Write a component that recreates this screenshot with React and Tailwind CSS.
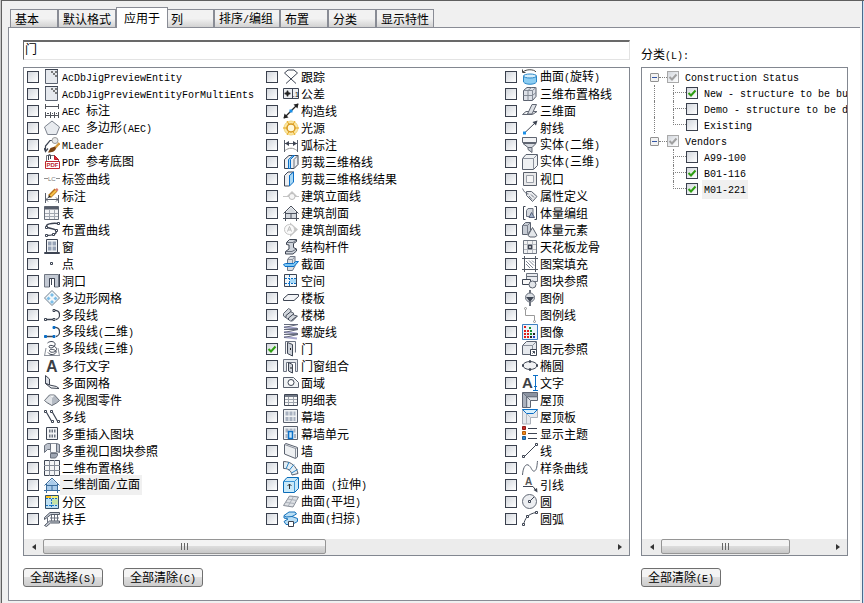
import { useState } from 'react'
import clsx from 'clsx'

const INK = '#3d4452'
const PALE = '#dde1e8'
const BLUE = '#0b6fc7'
const SKY = '#a9d8f5'
const GRAY = '#8b909a'

const house = (fill, ink) => (
  <>
    <path d="M2.5 7.5 8 2l5.5 5.5v6h-11z" fill={fill} stroke="none" />
    <path d="M.5 8.500 8 1l7.500 7.500M0 13.500h16M8 8.500v5M3 8.500h10M2.500 7v9M13.500 7v9" stroke={ink} />
  </>
)

const doc = (
  <>
    <path d="M1.500.500h12v14h-12z" fill="#e6e9ee" stroke="#5a616e" />
    <path d="M1 .500h13" stroke={INK} />
    <path d="M7 3h2M9 5h2M11 3h2M11 7h2" stroke="#555" strokeWidth="1.500" />
  </>
)

const polyline = dot => (
  <>
    <path d="M1.500 12.500h8M10 3.500c7-1 7 8 2 9" strokeWidth="1.300" />
    <path d="M9 2.500h2v2H9zM.5 11.500h2v2h-2zM9 11.500h2v2H9z" fill={dot} stroke={dot === '#fff' ? INK : dot} />
  </>
)

const table = (
  <>
    <path d="M.5 1.500h14v13H.5z" fill="#f3f4f6" stroke="#666d79" />
    <path d="M.5 3h14" stroke="#565d6a" strokeWidth="3" />
    <path d="M1 8.500h13M1 11.500h13M5.500 5v9M10.500 5v9" stroke="#a2a8b1" />
  </>
)

const ICONS = {
  doc,
  aecDim: (
    <path d="M1 3.500h14M1.500 1v5M14.500 1v5M1 12.500h14M1.500 9v6M6.500 9v6M10.500 9v6M14.500 9v6M3 10.500h2M8 10.500h1M12 10.500h1" stroke="#50535a" />
  ),
  pentagon: <path d="M8 1 15.500 7 12.500 14.500h-9L.5 7z" fill="#e8ebef" stroke="#7d838e" />,
  mleader: (
    <>
      <path d="M1.500 14.500V9L6 3.500h3M0 11l1.500 3.500L4 11.500" strokeWidth="1.200" />
      <circle cx="11" cy="3.500" r="3" fill="#e8e8e8" stroke="#9a9a9a" />
      <path d="m15.500 6-4.500 5" stroke="#d69a3e" strokeWidth="2.500" />
      <path d="M11 9.500 6.500 11 4 15.500c4 0 7-1 8-4z" fill="#7a4314" stroke="none" />
    </>
  ),
  pdf: (
    <>
      <path d="M2.500 1.500h8l4 4v9h-12z" fill="#fff" stroke="#6d7178" />
      <path d="M10.500 1.500v4h4z" fill="#e02b35" stroke="#b81d27" />
      <path d="M1.500 7.500h14v7h-14z" fill="#fff" stroke="#bd2731" />
      <path d="M4.500 6V1.500a1 1 0 0 1 2 0V5" />
      <text x="2.500" y="13.200" fontSize="6" fontWeight="700" fill="#bd2731" stroke="none" className="font-['Liberation_Sans',sans-serif]">PDF</text>
    </>
  ),
  labelCurve: (
    <>
      <path d="M0 7.500h4M12 7.500h4" stroke="#8f8f8f" />
      <text x="4" y="9.800" fontSize="6" fill="#777" stroke="none" className="font-['Liberation_Sans',sans-serif]">LC</text>
    </>
  ),
  dim: (
    <>
      <path d="M1.500 5v10M14.500 7v8M2 11.500h12M4 9.500l-2 2 2 2M12 9.500l2 2-2 2" stroke="#5a606c" />
      <path d="M5.500 8.500 12 2" stroke="#b5731b" strokeWidth="4" />
      <path d="M6 8.500 12 2.500" stroke="#f6c04a" strokeWidth="2" />
      <path d="m4 10 1-3 2 2z" fill="#222" stroke="none" />
      <path d="m11 1.500 2-1.500 1.500 2L13 3.500z" fill="#dd7a6b" stroke="none" />
    </>
  ),
  table,
  layoutCurve: (
    <>
      <path d="M14 1.500C7 1 2 2 2.500 4.500S13 6 12.500 9.500 8 13.500 2 13.500" strokeWidth="1.500" />
      <path d="M13.500.500h2v2h-2zM1.500 4.500h2v2h-2zM11.500 7.500h2v2h-2zM1.500 12.500h2v2h-2zM8.500 11.500h2v2h-2z" fill="#fff" />
    </>
  ),
  window: (
    <>
      <path d="M2.500.500h11v13h-11z" fill="#f2f4f6" />
      <path d="M4 2.500h3.500v4H4zM8.500 2.500H12v4H8.500zM4 7.500h3.500v4H4zM8.500 7.500H12v4H8.500z" fill="#97a3b6" stroke="none" />
      <path d="M.5 13.500h15v1H.5z" fill="#fff" />
    </>
  ),
  point: <path d="M6.500 6.500h2v2h-2z" />,
  opening: (
    <>
      <path d="M.5 1.500h14v12.500h-4V5.500h-5V14h-5z" fill="#c3c9d3" stroke="#6f7682" />
      <path d="M5.500 14V5.500h5V14M15.500 1v13M7.500 6v6" />
    </>
  ),
  polygonMesh: (
    <>
      <path d="M8 .5 15.500 8 8 15.500.5 8z" fill="#f0f6fa" stroke="#70808e" />
      <path d="m8 3 2 2-2 2-2-2zM4.500 6.500l2 2-2 2-2-2zM11.500 6.500l2 2-2 2-2-2zM8 10l2 2-2 2-2-2z" fill="#7bbde8" stroke="none" />
    </>
  ),
  polyline: polyline('#fff'),
  polyline2d: polyline(BLUE),
  polyline3d: (
    <>
      <path d="M.5 15 2 7M15.500 15 14 7M.5 14.500h15" stroke={GRAY} />
      <path d="M3.500 2C7-1 12 1 11 4S5 8 5 5.500 13 5 12.500 8.500 5 12 5.500 9.500s8-.500 6.500 2-6 3-8 0" />
    </>
  ),
  mtext: <text x="2" y="14" fontSize="16" fontWeight="700" fill="#3c3f45" stroke="none" className="font-['Liberation_Sans',sans-serif]">A</text>,
  polyface: (
    <>
      <path d="M1.500.500 5.500 4v6l-4-1.500z" fill={PALE} />
      <path d="m5.500 10 7 1.500 2.500 2-8-.500-5.500-4.500z" fill="#f1f3f5" />
    </>
  ),
  multiView: (
    <>
      <path d="M.5 8.500 5.500 3h5l5 5.500-3 2.500L8 13.500 3.500 11z" fill="#b4bac3" stroke="#666c76" />
      <path d="M5.500 3.500h5L8 6z" fill="#f4f5f6" stroke="none" />
      <path d="M5.500 4 8 6v7L1 8.500z" fill="#e1e4e8" stroke="none" />
    </>
  ),
  mline: (
    <>
      <path d="m2 2.500 6 10.500M8 2.500l6 10.500" strokeWidth="1.200" />
      <path d="M.5 1.500h2v2h-2zM6.500 1.500h2v2h-2zM7.500 11.500h2v2h-2zM13.500 11.500h2v2h-2z" fill="#fff" />
    </>
  ),
  minsert: (
    <>
      <path d="M2.500 1.500h11v12h-11z" fill="#f3f4f6" />
      <path d="M5 5h1.500M7.500 5H9M10 5h1.500M5 10h1.500M7.500 10H9M10 10h1.500" stroke="#6d7480" strokeWidth="3" />
    </>
  ),
  multiViewRef: (
    <>
      <path d="M6.500.500h6v9h-6z" fill="#f8f8f8" stroke={GRAY} />
      <path d="m.5 2.500 3-2h3v6l-3 0-3 3zM12.500.500l3 1v8l-3-1z" fill="#bcc2cc" stroke="#69707c" />
      <path d="M6.500 10.500h7v2l-2 2.500h-5z" fill="#9fa6b2" stroke="#69707c" />
    </>
  ),
  grid2d: (
    <>
      <path d="M.5.500h15v15H.5z" fill="#f4f5f6" />
      <path d="M5.500 0v16M10.500 0v16M0 5.500h16M0 10.500h16" stroke="#858b96" />
    </>
  ),
  section2d: house('#a9cbea', '#3d6d9c'),
  zone: (
    <>
      <path d="M1.500 1.500h13v13h-13z" fill="#bfe0f2" stroke="#31506c" />
      <path d="M2 2h5v2H2z" fill="#ffc21c" stroke="none" />
      <path d="M8 2h6v2.500H8z" fill="#f8f06e" stroke="none" />
      <path d="M7.500 5.500H14v5H7.500z" fill="#c3e3a8" stroke="none" />
      <path d="M2 4.500h12M2 11.500h12M7.500 5v9" stroke="#1473c4" strokeDasharray="2 1" />
    </>
  ),
  railing: (
    <>
      <path d="M.5 6.500 6 1.500h9.500v2H7L.5 8.500z" fill="#c8cdd5" stroke="#535a67" />
      <path d="m.5 14.500 5-4.500h10v2H6.500l-4 3.500z" fill="#c8cdd5" stroke="#535a67" />
      <path d="M3.500 7v5M7.500 4v6M10.500 4v6M13.500 4v6M6 7h9" stroke="#6a717e" />
    </>
  ),
  track: <path d="M3 14.500 14.500 4 11 1H5L1.500 4 13 14.500" />,
  tolerance: (
    <>
      <path d="M.5 2.500h15v10H.5zM9.500 3v9" fill="#eceef1" />
      <path d="M4.500 4.500v6M1.500 7.500h6" stroke="#222" strokeWidth="1.300" />
      <circle cx="4.500" cy="7.500" r="1.700" stroke="#222" />
      <text x="9.500" y="10.500" fontSize="8" fill="#222" stroke="none" className="font-['Liberation_Sans',sans-serif]">.1</text>
    </>
  ),
  xline: (
    <>
      <path d="M1 15 15 1" stroke="#222" strokeWidth="1.200" />
      <path d="M.5 15.500 1.500 10.500 5.500 14.500zM15.500.500l-5 1 4 4z" fill="#222" stroke="none" />
      <path d="M6.500 6.500h3v3h-3z" fill="#1a8fe6" stroke="none" />
    </>
  ),
  light: (
    <>
      <circle cx="8" cy="8" r="7" fill="#fbe7a5" stroke="#f3d67b" />
      <path d="M0 8h16M4 1l8 14M12 1 4 15" stroke="#e7a71c" />
      <circle cx="8" cy="8" r="4" fill="#fff8da" stroke="#d6981f" strokeWidth="1.500" />
    </>
  ),
  arcDim: (
    <>
      <path d="M1.500 3v12M14.500 3v12M2 6.500h12" stroke="#5b616d" />
      <path d="m2 6.500 4-2.500v5zM14 6.500 10 4v5z" fill={INK} stroke="none" />
      <path d="M2 13.500c4-3 8-3 12 0" stroke="#999" />
    </>
  ),
  clip3d: (
    <>
      <path d="M1.500 5.500 6 1.500h9v9l-4 4H1.500z" fill="#eceef1" />
      <path d="M5.500 14.500V5.500L10 1.500h1.500l-4 4v9z" fill={SKY} stroke={BLUE} />
      <path d="M11 14.500v-9l4-4" stroke="#69707c" />
    </>
  ),
  clipResult: (
    <>
      <path d="M1.500 4.500 5 1h5.500L6.500 4.500V15h-5z" fill="#eceef1" />
      <path d="M6.500 4.500 10.500 1v10l-4 4z" fill={SKY} stroke={BLUE} />
    </>
  ),
  elevLine: (
    <>
      <path d="M0 8.500h16" stroke="#c4c4c4" />
      <path d="m4 8 5-5 5 5z" fill="#c4c4c4" stroke="none" />
      <circle cx="9" cy="8.500" r="3" fill="#f5f5f5" stroke="#bcbcbc" />
    </>
  ),
  section: house('#d5d9df', '#4c525e'),
  sectionLine: (
    <>
      <path d="M7 .5 15 7.500 7 15z" fill="#c4c4c4" stroke="none" />
      <circle cx="6.500" cy="7.500" r="5" fill="#fafafa" stroke="#c4c4c4" />
      <path d="m4.500 9.500 2-5 2 5M5.500 8h2" stroke="#b8b8b8" />
    </>
  ),
  member: (
    <>
      <path d="M3.500 3.500 6.500.500h7v2l-3 2v4l3 1.500v2l-3.500 3H2.500v-2.500L6 10V6L3.500 5.500z" fill="#cfd4db" />
      <path d="M3.500 3.500H10l3.500-3M2.500 12.500H9l4.500-2.500" stroke="#69707c" />
    </>
  ),
  cutPlane: (
    <>
      <path d="M4.500 3.500 7 .500h5v9.500l-2.500 4.500h-5z" fill="#d9dde2" stroke="#707784" />
      <path d="M4.500 3.500h5v4M9.500 3.500l2.500-3" stroke="#8b919d" />
      <path d="m.5 8.500 2-1h8l2-2h3L11 10.500H2z" fill="#7cc6f3" stroke={BLUE} />
    </>
  ),
  space: (
    <>
      <path d="M1.500 1.500h12v12h-12z" fill="#f3f6f8" />
      <path d="M7 6h6v4H7z" fill="#a9d8f5" stroke="none" />
      <path d="M2 5.500h11M2 10.500h11M6.500 2v11" stroke={BLUE} strokeDasharray="2 1" />
    </>
  ),
  slab: <path d="M.5 8.500 5 4.500h10.500v2L11 10.500H.5z" fill="#f3f4f6" />,
  stair: (
    <>
      <path d="m.5 6.500 5-5L8 3v2l2.500 1v2l4 1-5 5h-2L.5 9z" fill="#d3d7dd" stroke="#5d6471" />
      <path d="m3 8.500 5-4M5.500 11l5-4M8.500 13.500l5-4M3 8.500v2M5.500 11v2" />
    </>
  ),
  helix: (
    <>
      <path d="M1 3 14 4.500M1 8l13 1.500M1 13l13 1.500" stroke="#a9a9cf" strokeWidth="2" />
      <path d="M1 .500h14L1 3.500M1 5.500 15 4.500M1 5.500h14L1 8.500M15 9.500 1 10.500h14L1 13.500" stroke="#666b7c" />
    </>
  ),
  door: (
    <>
      <path d="M2.500 13V.500h10v11" fill="#f4f4f4" stroke="#6b7280" />
      <path d="m4.500 1.500 5 2v11.500l-5-2.500z" fill="#cdd2d9" />
      <path d="M7.500 7v2" stroke="#222" />
    </>
  ),
  assembly: (
    <>
      <path d="M.5 13.500V1.500h14v12h-2v-9h-9v9z" fill="#e6e9ed" stroke="#6b7280" />
      <path d="m5.500 4.500 4 2v8.500l-4-2z" fill="#cdd2d9" />
      <path d="M8 9v2" stroke="#222" />
    </>
  ),
  region: (
    <>
      <path d="M.5 2.500h10l5 5v5H.5z" fill="#f0f2f4" stroke="#5a616e" />
      <circle cx="8" cy="7.500" r="3" fill="#fff" />
    </>
  ),
  schedule: (
    <>
      <path d="M1.500 2.500h13v11h-13z" fill="#f7f7f7" />
      <path d="M2 4h12" stroke="#717885" strokeWidth="2" />
      <path d="M2 7.500h12M2 10.500h12M5.500 5v8M10.500 5v8" stroke="#9ea4ad" />
    </>
  ),
  curtain: (
    <>
      <path d="M.5.500h14v13H.5z" fill="#f1f3f5" stroke="#5a616e" />
      <path d="M2.500 2.500h3v4h-3zM6.500 2.500h3v4h-3zM10.500 2.500h2v4h-2zM2.500 8h3v4h-3zM6.500 8h3v4h-3zM10.500 8h2v4h-2z" fill="#a9b2c0" stroke="none" />
    </>
  ),
  curtainUnit: (
    <>
      <path d="M.5.500h14v13H.5z" fill="#f1f3f5" stroke="#5a616e" />
      <path d="M2.500 2.500h3v4h-3zM6.500 2.500h3v2h-3zM10.500 2.500h2v4h-2zM2.500 8h2v4h-2zM11 8h2v4h-2z" fill="#a9b2c0" stroke="none" />
      <path d="M5.500 5.500h4v7h-4z" fill="#c6e6fa" stroke={BLUE} strokeWidth="1.500" />
    </>
  ),
  wall: (
    <>
      <path d="M1.500 1.500 3 .500l11.500 4v9.500L12.500 15.500 1.500 11z" fill="#eef0f2" stroke="#5a616e" />
      <path d="m1.500 1.500 11 4v9.500M12.500 5.500l2-1" stroke="#8a909b" />
    </>
  ),
  surface: (
    <>
      <path d="M.5 1.500C9 1.500 13.500 7 15 13.500l-6 1.500C8 10 5 8.500.5 8.500z" fill="#e4eef4" stroke="#59616f" />
      <path d="m3 9 3-7M6 10.500l5-6M8.500 13l6-3.500" stroke="#2b86c8" />
    </>
  ),
  extrude: (
    <>
      <path d="M.5 4.500 4 .500h11.500v11l-4 4H.5z" fill="#c9e9f9" stroke="#0c6cb8" />
      <path d="M.5 4.500h11v11M11.500 4.500l4-4" stroke="#3b94d3" />
      <path d="M6.500 12V7M4.500 9l2-2 2 2" stroke="#333" />
    </>
  ),
  planar: (
    <>
      <path d="m.5 11.500 6-9.500 9 1-5.500 10z" fill="#dfe2e6" stroke="#868c96" />
      <path d="m5 12.500 5.500-10M2.500 8.500l9.500 1M4.500 5l9.500 1.500" stroke="#a9afb8" />
    </>
  ),
  sweep: (
    <>
      <path d="M1 4.500 6 1h6l1.500 2L9 5.500l5.500 2v3L9 13.500H3L1 10.500l4-2.500-4-1z" fill="#b9def5" stroke="#1672bb" />
      <path d="M1 4.500 3 6l6-.500" stroke="#1672bb" />
      <path d="M5.500 10.500h5v5h-5z" fill="#fff" />
    </>
  ),
  revolve: (
    <>
      <path d="M1.500 7v6c2 3 11 3 13 0V7z" fill="#8ccdf2" stroke="#2a87c8" />
      <ellipse cx="8" cy="7" rx="6.500" ry="2" fill="#d8effb" stroke="#2a87c8" />
      <path d="M1 3c3-3 11-3 13 0M.5.500v3h3" stroke="#444" />
    </>
  ),
  grid3d: (
    <>
      <path d="M1.500 4.500 5 1.500h9v9l-3.500 4h-9z" fill={PALE} stroke="#5a616e" />
      <path d="M1.500 4.500h9v10M10.500 4.500l3.500-3M6 4.500v10M1.500 9.500h9l3.500-3M6 4.500l3.500-3" stroke="#848b96" />
    </>
  ),
  face3d: (
    <>
      <path d="M.5 11.500 4 8.500h11l-4.500 3z" fill="#f1f3f5" stroke="#5f6571" />
      <path d="M5.500 11 10 1.500h4.500L10 11z" fill="#dde0e5" stroke="#5f6571" />
    </>
  ),
  ray: (
    <>
      <path d="M2 13.500 14 2" />
      <path d="m15.500.500-5 1.500 3.500 3.500z" fill={INK} stroke="none" />
      <path d="M1 11.500h3v3H1z" fill="#1a8fe6" stroke="none" />
    </>
  ),
  solid2d: (
    <>
      <path d="M.5.500h14v5H.5z" fill="#f2f3f5" stroke="#5f6571" />
      <path d="m1 6.500 5 4h4l4-4z" fill="#d6dae0" stroke="#5f6571" />
      <path d="M6 10.500v2l4 3v-5z" fill="#c6cbd3" stroke="#5f6571" />
    </>
  ),
  solid3d: (
    <>
      <path d="M.5 4.500 4 .500h11.500v11l-4 4H.5z" fill="#eff1f3" stroke="#5a616e" />
      <path d="M.5 4.500h11v11M11.500 4.500l4-4" stroke="#8a909b" />
    </>
  ),
  viewport: (
    <>
      <path d="M1.500 1.500h13v13h-13z" fill="#e9e9ea" stroke="#595f6a" />
      <path d="M4.500 4.500h7v7h-7z" fill="#f6f6f6" stroke="#9ba0a9" />
    </>
  ),
  attdef: (
    <>
      <path d="M4.500 3.500h5l5.500 5-4.500 5-6-6z" fill="#e9ebee" stroke="#5c636f" />
      <path d="M.5.500C2 4 4 6 6.500 6M7 8l3 3.500M9 6.500l3 3" stroke="#6d7380" />
    </>
  ),
  massGroup: (
    <>
      <path d="M3.500 1.500h-2v13h2M12.500 1.500h2v13h-2" />
      <path d="M4.500 5.500 6 3.500h5v6l-1.500 2h-5z" fill="#d5d9df" stroke="#6b7280" />
      <path d="m7 12.500 2.500-5 3 5z" fill="#9fb0c8" stroke="#57617a" />
    </>
  ),
  massElement: (
    <>
      <path d="M.5 3.500 3.500.500h5v8l-3 4h-5z" fill="#c7ccd4" stroke="#5a616e" />
      <path d="M.5 3.500h5v8M5.500 3.500l3-3" stroke="#7a818d" />
      <path d="m6 13.500 4.500-8 4.500 8-2 1.500H8z" fill="#e4e7eb" stroke="#5a616e" />
    </>
  ),
  ceiling: (
    <>
      <path d="M1.500 1.500h13v13h-13z" fill="#f1f2f3" stroke="#6f7682" />
      <path d="M5.500 2v12M10.500 2v12M2 5.500h12M2 10.500h12" stroke="#b3b7be" />
      <path d="M6.500 6.500h3v3h-3z" fill="#fff" strokeWidth="1.300" />
    </>
  ),
  hatch: (
    <>
      <path d="M0 2.500h16M0 13.500h16M2.500 0v16M13.500 0v16" stroke="#525863" />
      <path d="m4 5 7 7M4 8l4 4M7 4.500l5 5M10 4.500l2 2" stroke="#818896" />
    </>
  ),
  blockRef: (
    <>
      <path d="M4.500.500h11v8h-11zM5 3.500h10" fill="#e8eaee" stroke="#6b727e" />
      <path d="M.5 6.500h8v5h-8z" fill="#f7f7f7" />
      <circle cx="10.500" cy="11.500" r="3.500" fill="#e3e6ea" stroke="#5a616e" />
    </>
  ),
  legend: (
    <>
      <path d="M8 0v16" strokeWidth="1.500" />
      <circle cx="8" cy="7.500" r="4.500" fill="#d9dde2" stroke="#6b727e" />
      <path d="M4 7h8l-4 5z" fill={INK} stroke="none" />
    </>
  ),
  legendLine: (
    <>
      <path d="M3.500 3v5.500h9V13" stroke="#9a9a9a" />
      <circle cx="3.500" cy="1.500" r="1" stroke="#8f8f8f" />
      <circle cx="12.500" cy="14.500" r="1" stroke="#8f8f8f" />
    </>
  ),
  image: (
    <>
      <path d="M.5.500h15v15H.5z" fill="#edf5fb" stroke="#3d7fc1" />
      <path d="M2 3h2M2 7h2M5 7h2" stroke="#e02020" strokeWidth="2" />
      <path d="M2 10h2M5 10h2M2 13h2M5 13h2" stroke="#e02020" strokeWidth="2" />
      <path d="M7 4h2M8 7h2M8 10h2" stroke="#149030" strokeWidth="2" />
      <path d="M8 13h2M11 10h2" stroke="#222" strokeWidth="2" />
      <path d="M11 13h2" stroke="#1d3fc0" strokeWidth="2" />
    </>
  ),
  elementRef: (
    <>
      <path d="m.5 4.500 4-4h10v9l-4 4H.5z" fill="#e6e9ed" stroke="#5a616e" />
      <path d="M.5 4.500h10v9M10.500 4.500l4-4" stroke="#8a909b" />
      <path d="M8.500 8.500h6v6h-6z" fill="#fff" />
      <path d="m10.500 12.500 2-2M10.500 10.500h2v2" />
    </>
  ),
  ellipse: (
    <>
      <ellipse cx="8" cy="7.500" rx="7" ry="4" fill="#f1f2f4" />
      <path d="M7.500 2.500h1v2h-1zM.5 6.500h1v2h-1zM14.500 6.500h1v2h-1zM7.500 10.500h1v2h-1z" fill="#fff" />
    </>
  ),
  text: (
    <>
      <text x="0" y="13" fontSize="15" fontWeight="700" fill="#3c3f45" stroke="none" className="font-['Liberation_Sans',sans-serif]">A</text>
      <path d="M13.500 1v14M11 .500h5M11 15.500h5M12 11.500h3" stroke={BLUE} />
    </>
  ),
  roof: (
    <>
      <path d="M.5.500h15v8h-7v7h-8z" fill="#dfe2e7" stroke="#5d6472" />
      <path d="m1 1 4.500 4.500H15V1z" fill="#8b93a1" stroke="none" />
      <path d="m1 1 4.500 4.500V15H1z" fill="#aab1bd" stroke="none" />
      <path d="m.5.500 8 8M5.500 4.500h10M4.500 5v10" stroke="#6c7482" />
    </>
  ),
  roofSlab: (
    <>
      <path d="M.5.500h15v8h-7v6.500h-8z" fill="#e6e9ed" stroke="#aab0b9" />
      <path d="m.5.500 4 4h7l4-4z" fill="#d7effc" stroke={BLUE} />
      <path d="M4.500 5v10M5 5l3.500 3.500" stroke="#b4bac2" />
    </>
  ),
  theme: (
    <>
      <path d="M.5.500h3v3h-3z" fill="#c82d26" stroke="#8e1c18" />
      <path d="M.5 5.500h3v3h-3z" fill="#f08a1c" stroke="#b25e0b" />
      <path d="M.5 10.500h3v3h-3z" fill="#2b84cf" stroke="#1b5c96" />
      <path d="M6 2.500h9M6 7.500h9M6 12.500h9" />
    </>
  ),
  line: (
    <>
      <path d="m2 14 12-12" />
      <path d="M.5 12.500h2v2h-2zM13.500.500h2v2h-2z" fill="#fff" />
    </>
  ),
  spline: <path d="M.5 15C1 7 4 3 7 5.500s3 6.500 5.500 5.500S15 5 15.500 1" stroke="#5a616e" />,
  leader: (
    <>
      <text x="3" y="8" fontSize="10" fontWeight="700" fill="#555" stroke="none" className="font-['Liberation_Sans',sans-serif]">A</text>
      <path d="M1 9.500h10l3 4" />
      <path d="m15.500 15.500-4-2.500 3.500-2z" fill={INK} stroke="none" />
    </>
  ),
  circle: (
    <>
      <circle cx="7.500" cy="7.500" r="7" fill="#eceef1" stroke="#636a76" />
      <path d="m8 7 4-4" />
      <path d="M6.500 6.500h2v2h-2z" fill="#fff" />
    </>
  ),
  arc: (
    <>
      <path d="M1.500 14C3 7 6 3 14 1.500" />
      <path d="M.5 12.500h2v2h-2zM13.500.500h2v2h-2zM4.500 4.500h2v2h-2z" fill="#fff" />
    </>
  ),
}

// label, icon, in column order
const ENTITIES = [
  ['AcDbJigPreviewEntity', 'doc'],
  ['AcDbJigPreviewEntityForMultiEnts', 'doc'],
  ['AEC 标注', 'aecDim'],
  ['AEC 多边形(AEC)', 'pentagon'],
  ['MLeader', 'mleader'],
  ['PDF 参考底图', 'pdf'],
  ['标签曲线', 'labelCurve'],
  ['标注', 'dim'],
  ['表', 'table'],
  ['布置曲线', 'layoutCurve'],
  ['窗', 'window'],
  ['点', 'point'],
  ['洞口', 'opening'],
  ['多边形网格', 'polygonMesh'],
  ['多段线', 'polyline'],
  ['多段线(二维)', 'polyline2d'],
  ['多段线(三维)', 'polyline3d'],
  ['多行文字', 'mtext'],
  ['多面网格', 'polyface'],
  ['多视图零件', 'multiView'],
  ['多线', 'mline'],
  ['多重插入图块', 'minsert'],
  ['多重视口图块参照', 'multiViewRef'],
  ['二维布置格线', 'grid2d'],
  ['二维剖面/立面', 'section2d'],
  ['分区', 'zone'],
  ['扶手', 'railing'],
  ['跟踪', 'track'],
  ['公差', 'tolerance'],
  ['构造线', 'xline'],
  ['光源', 'light'],
  ['弧标注', 'arcDim'],
  ['剪裁三维格线', 'clip3d'],
  ['剪裁三维格线结果', 'clipResult'],
  ['建筑立面线', 'elevLine'],
  ['建筑剖面', 'section'],
  ['建筑剖面线', 'sectionLine'],
  ['结构杆件', 'member'],
  ['截面', 'cutPlane'],
  ['空间', 'space'],
  ['楼板', 'slab'],
  ['楼梯', 'stair'],
  ['螺旋线', 'helix'],
  ['门', 'door'],
  ['门窗组合', 'assembly'],
  ['面域', 'region'],
  ['明细表', 'schedule'],
  ['幕墙', 'curtain'],
  ['幕墙单元', 'curtainUnit'],
  ['墙', 'wall'],
  ['曲面', 'surface'],
  ['曲面 (拉伸)', 'extrude'],
  ['曲面(平坦)', 'planar'],
  ['曲面(扫掠)', 'sweep'],
  ['曲面(旋转)', 'revolve'],
  ['三维布置格线', 'grid3d'],
  ['三维面', 'face3d'],
  ['射线', 'ray'],
  ['实体(二维)', 'solid2d'],
  ['实体(三维)', 'solid3d'],
  ['视口', 'viewport'],
  ['属性定义', 'attdef'],
  ['体量编组', 'massGroup'],
  ['体量元素', 'massElement'],
  ['天花板龙骨', 'ceiling'],
  ['图案填充', 'hatch'],
  ['图块参照', 'blockRef'],
  ['图例', 'legend'],
  ['图例线', 'legendLine'],
  ['图像', 'image'],
  ['图元参照', 'elementRef'],
  ['椭圆', 'ellipse'],
  ['文字', 'text'],
  ['屋顶', 'roof'],
  ['屋顶板', 'roofSlab'],
  ['显示主题', 'theme'],
  ['线', 'line'],
  ['样条曲线', 'spline'],
  ['引线', 'leader'],
  ['圆', 'circle'],
  ['圆弧', 'arc'],
]

const TABS = ['基本', '默认格式', '应用于', '列', '排序/编组', '布置', '分类', '显示特性']

const TREE = [
  { label: 'Construction Status', items: ['New - structure to be built', 'Demo - structure to be demolished', 'Existing'] },
  { label: 'Vendors', items: ['A99-100', 'B01-116', 'M01-221'] },
]

// Latin runs are half the width of a Chinese character
function Text({ children }) {
  return (
    <span className="whitespace-pre">
      {children.split(/([\x20-\x7e]+)/).map((part, i) =>
        i % 2 ? <span key={i} className="font-['Liberation_Mono',monospace] text-[10px]">{part}</span> : part
      )}
    </span>
  )
}

function Check({ muted, ...props }) {
  return (
    <span className="grid size-3 shrink-0">
      <input
        type="checkbox"
        className={clsx(
          'col-start-1 row-start-1 size-3 appearance-none border bg-linear-to-br from-[#d3d7dd] to-white',
          muted ? 'border-[#a9a9a9]' : 'border-[#3a404d]'
        )}
        {...props}
      />
      {props.checked && (
        <svg viewBox="0 0 12 12" className="pointer-events-none col-start-1 row-start-1 size-3" fill="none">
          <path d="M2.500 6 5 8.500 9.500 3.500" stroke={muted ? '#a0a0a0' : '#2f9e12'} strokeWidth="2" />
        </svg>
      )}
    </span>
  )
}

function Button({ children, onClick }) {
  return (
    <button
      onClick={onClick}
      className="h-[19px] rounded-[3px] border border-[#6f6f6f] bg-linear-to-b from-[#f4f4f4] from-45% via-[#dedede] via-50% to-[#cdcdcd] px-[6px] leading-4"
    >
      <Text>{children}</Text>
    </button>
  )
}

function ScrollBar({ thumb, rest }) {
  return (
    <div className="flex h-4 bg-[#ececec] pb-px">
      <button aria-label="向左滚动" className="flex w-[19px] items-center justify-center">
        <svg viewBox="0 0 4 6" className="h-[6px] w-1"><path d="M4 0v6L0 3z" fill="#333" /></svg>
      </button>
      <div className={clsx('flex items-center justify-center gap-[2px] rounded-xs border border-[#959595] bg-linear-to-b from-[#f3f3f3] from-45% via-[#dcdcdc] via-50% to-[#c8c8c8]', thumb)}>
        <span className="h-[7px] w-px bg-[#666]" />
        <span className="h-[7px] w-px bg-[#666]" />
        <span className="h-[7px] w-px bg-[#666]" />
      </div>
      <div className={rest} />
      <button aria-label="向右滚动" className="flex w-[19px] items-center justify-center">
        <svg viewBox="0 0 4 6" className="h-[6px] w-1"><path d="M0 0v6l4-3z" fill="#333" /></svg>
      </button>
    </div>
  )
}

function TreeGroup({ label, items, checked, onToggle, connected }) {
  return (
    <li>
      <div className="flex h-4 items-center pl-2">
        <button aria-label={'折叠 ' + label} className="flex size-[9px] items-center justify-center rounded-[1px] border border-[#919191] bg-[#f2f2f2]">
          <span className="h-px w-[5px] bg-[#3355a5]" />
        </button>
        <span className="w-2 border-t border-dotted border-[#808080]" />
        <label className="flex items-center gap-1">
          <Check checked muted readOnly />
          <span className="px-[2px] leading-4"><Text>{label}</Text></span>
        </label>
      </div>
      <ul>
        {items.map((item, i) => (
          <li key={item} className="flex h-4 pl-3">
            <span className={clsx('w-[19px] shrink-0', connected && 'border-l border-dotted border-[#808080]')} />
            <span className="flex w-[13px] shrink-0 flex-col">
              <span className="h-2 border-b border-l border-dotted border-[#808080]" />
              {i < items.length - 1 && <span className="h-2 border-l border-dotted border-[#808080]" />}
            </span>
            <label className="flex items-center gap-1">
              <Check checked={checked.includes(item)} onChange={() => onToggle(item)} />
              <span className={clsx('px-[2px] leading-4', item === 'M01-221' && 'bg-[#f0f0f0]')}><Text>{item}</Text></span>
            </label>
          </li>
        ))}
      </ul>
    </li>
  )
}

const toggle = (list, item) => list.includes(item) ? list.filter(x => x !== item) : [...list, item]

export default function App() {
  const [tab, setTab] = useState('应用于')
  const [filter, setFilter] = useState('门')
  const [selected, setSelected] = useState(['门'])
  const [classes, setClasses] = useState(['New - structure to be built', 'B01-116', 'M01-221'])

  return (
    <div className="min-h-screen border-l border-[#c8c8c8] bg-[#f0f0f0] font-['Noto_Sans_CJK_SC',sans-serif] text-xs text-black">
      <div className="flex min-h-screen border-t border-l border-[#5f5f5f] pl-[6px]">
        <div className="min-w-0 flex-1">
          {/* Tabs */}
          <div role="tablist" className="flex h-[26px] items-end pl-[2px]">
            {TABS.map(t => (
              <button
                key={t}
                role="tab"
                aria-selected={t === tab}
                onClick={() => setTab(t)}
                className={clsx(
                  'border border-b-0 border-[#898c95] text-left',
                  t === tab
                    ? 'z-10 -mr-[2px] -mb-px h-[21px] bg-white px-[7px] leading-[18px]'
                    : 'h-[18px] bg-linear-to-b from-[#f2f2f2] from-50% to-[#d2d2d2] px-1 leading-4',
                  t !== tab && (t.length > 4 ? 'min-w-[66px]' : 'min-w-12')
                )}
              >
                <Text>{t}</Text>
              </button>
            ))}
          </div>

          <div className="flex gap-[11px] border border-r-0 border-[#898c95] bg-white pt-3 pr-3 pb-[13px] pl-[14px]">
            {/* Entity list */}
            <div className="flex min-w-0 flex-1 flex-col">
              <input
                aria-label="名称"
                value={filter}
                onChange={e => setFilter(e.target.value)}
                className="h-5 w-full border border-t-2 border-t-[#696969] border-r-[#e3e3e3] border-b-[#e3e3e3] border-l-[#696969] px-px pb-1 outline-none"
              />
              <div className="mt-[7px] border border-[#828790]">
                <div className="grid grid-flow-col grid-rows-27 auto-cols-[239px] overflow-hidden pb-3 pl-[3px]">
                  {ENTITIES.map(([name, icon]) => (
                    <label key={name} className="flex h-[17px] items-center">
                      <Check checked={selected.includes(name)} onChange={() => setSelected(toggle(selected, name))} />
                      <svg viewBox="0 0 16 16" className="ml-[5px] size-4 shrink-0" fill="none" stroke={INK}>{ICONS[icon]}</svg>
                      <span className={clsx('px-[2px] leading-[17px]', name === '二维剖面/立面' && 'bg-[#f0f0f0]')}>
                        <Text>{name}</Text>
                      </span>
                    </label>
                  ))}
                </div>
                <ScrollBar thumb="flex-[282]" rest="flex-[285]" />
              </div>
              <div className="mt-3 flex gap-5">
                <Button onClick={() => setSelected(ENTITIES.map(e => e[0]))}>全部选择(S)</Button>
                <Button onClick={() => setSelected([])}>全部清除(C)</Button>
              </div>
            </div>

            {/* Classifications */}
            <div className="flex w-[207px] shrink-0 flex-col items-start">
              <div className="h-[27px] pt-[6px] leading-4"><Text>分类(L):</Text></div>
              <div className="flex w-full flex-1 flex-col border border-[#828790]">
                <ul className="flex-1 overflow-hidden pt-px whitespace-nowrap">
                  {TREE.map((g, i) => (
                    <TreeGroup key={g.label} {...g} connected={i === 0} checked={classes} onToggle={c => setClasses(toggle(classes, c))} />
                  ))}
                </ul>
                <ScrollBar thumb="flex-[129]" rest="flex-[38]" />
              </div>
              <div className="mt-3 flex">
                <Button onClick={() => setClasses([])}>全部清除(E)</Button>
              </div>
            </div>
          </div>
        </div>
        <div className="ml-[2px] w-[2px] border-l border-[#4b6a8c] bg-[#cfe0f2]" />
      </div>
    </div>
  )
}
